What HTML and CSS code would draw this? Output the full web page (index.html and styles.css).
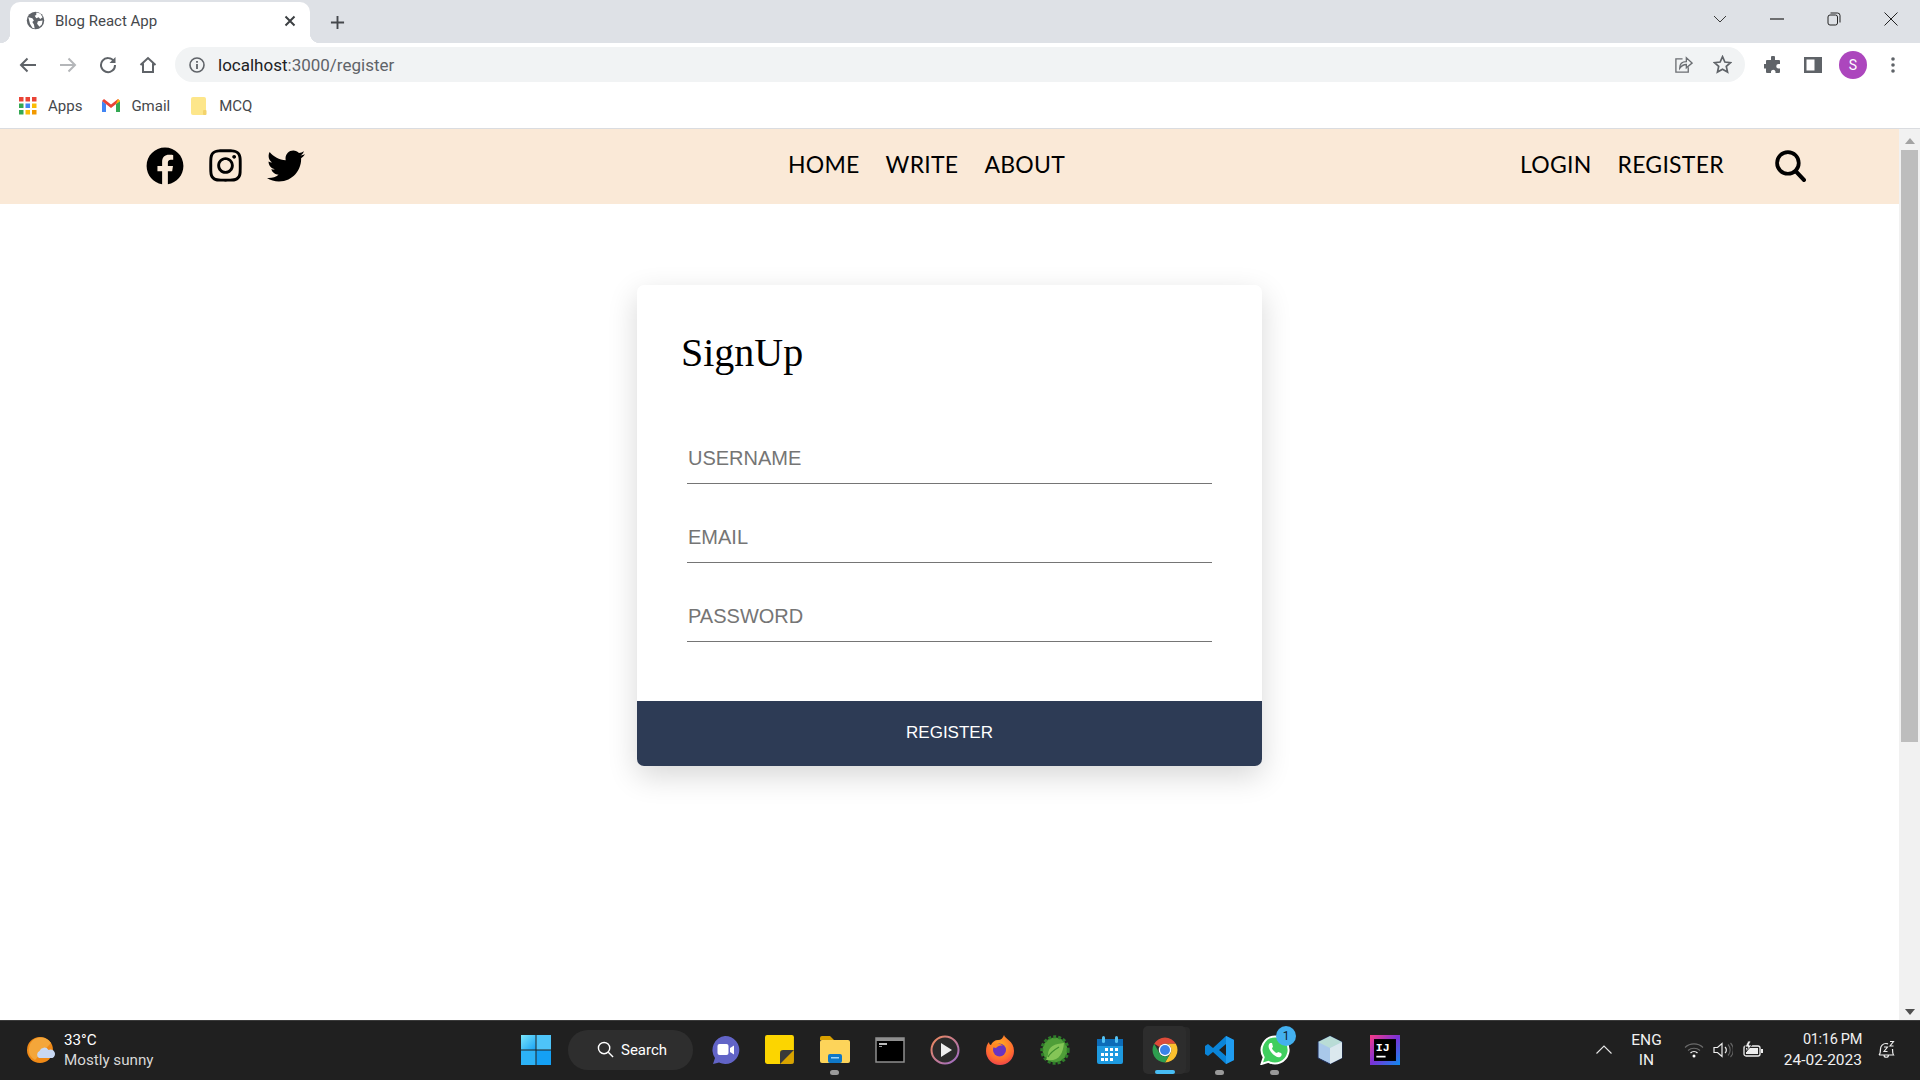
FILE: index.html
```html
<!DOCTYPE html>
<html lang="en">
<head>
<meta charset="utf-8">
<title>Blog React App</title>
<link rel="stylesheet" href="styles.css">
</head>
<body>
<div class="window">
  <div class="tabstrip">
    <div class="tab">
      <svg class="tab-favicon" viewBox="0 0 24 24"><circle cx="12" cy="12" r="11" fill="#5f6368"/><path d="M3 8l5 1 2 3-2 2 2 3 1 5-3-1-3-5zM13 2l5 1 3 5-3 2-2-2-3 1-2-3 2-1zM15 13l6-1-1 5-3 3-3-4z" fill="#fff"/></svg>
      <span class="tab-title">Blog React App</span>
      <svg class="tab-close" viewBox="0 0 12 12"><path d="M1.500 1.500l9 9M10.500 1.500l-9 9" stroke="#3c4043" stroke-width="2"/></svg>
    </div>
    <svg class="new-tab" viewBox="0 0 16 16"><path d="M8 1v14M1 8h14" stroke="#45484c" stroke-width="2"/></svg>
    <div class="win-controls">
      <span class="win-btn"><svg width="14" height="8" viewBox="0 0 14 8"><path d="M1 1l6 6 6-6" fill="none" stroke="#3a3a3a" stroke-width="1"/></svg></span>
      <span class="win-btn"><svg width="14" height="2" viewBox="0 0 14 2"><path d="M0 1h14" stroke="#222" stroke-width="1.200"/></svg></span>
      <span class="win-btn"><svg width="14" height="14" viewBox="0 0 14 14"><rect x="1" y="3" width="9.500" height="10" rx="2" fill="none" stroke="#222"/><path d="M3.500 1h7a2.500 2.500 0 0 1 2.500 2.500v7" fill="none" stroke="#222"/></svg></span>
      <span class="win-btn"><svg width="14" height="14" viewBox="0 0 14 14"><path d="M.5.5l13 13M13.500.5l-13 13" stroke="#222" stroke-width="1"/></svg></span>
    </div>
  </div>

  <div class="toolbar">
    <span class="tool"><svg width="18" height="16" viewBox="0 0 18 16"><path d="M17 8H2M8.500 1.500L2 8l6.500 6.500" fill="none" stroke="#5f6368" stroke-width="2"/></svg></span>
    <span class="tool"><svg width="18" height="16" viewBox="0 0 18 16"><path d="M1 8h15M9.500 1.500L16 8l-6.500 6.500" fill="none" stroke="#b4b6b9" stroke-width="2"/></svg></span>
    <span class="tool"><svg width="18" height="18" viewBox="0 0 18 18"><path d="M15 5.500A7 7 0 1 0 16 9" fill="none" stroke="#5f6368" stroke-width="2"/><path d="M16.500 1v6h-6z" fill="#5f6368"/></svg></span>
    <span class="tool"><svg width="18" height="18" viewBox="0 0 18 18"><path d="M1.500 9L9 2l7.500 7M4 7.500V16h10V7.500" fill="none" stroke="#5f6368" stroke-width="2"/></svg></span>
    <div class="omnibox">
      <svg class="omni-info" viewBox="0 0 16 16"><circle cx="8" cy="8" r="7" fill="none" stroke="#5f6368" stroke-width="1.600"/><path d="M8 7v5M8 4v1.800" stroke="#5f6368" stroke-width="1.800"/></svg>
      <span class="url"><span class="url-host">localhost</span>:3000/register</span>
      <svg class="omni-share" viewBox="0 0 20 20"><path d="M9 4H2v14h13v-5" fill="none" stroke="#6b6e72" stroke-width="1.400"/><path d="M6 14c0-5 3-7 7-7V3l6 5.500-6 5V10c-3 0-5 1-7 4z" fill="none" stroke="#6b6e72" stroke-width="1.400"/></svg>
      <svg class="omni-star" viewBox="0 0 20 20"><path d="M10 1.800l2.500 5.600 6 .6-4.500 4 1.300 6L10 15l-5.300 3 1.300-6-4.500-4 6-.6z" fill="none" stroke="#5f6368" stroke-width="1.800"/></svg>
    </div>
    <span class="tool"><svg width="18" height="18" viewBox="0 0 18 18"><path d="M7 1.500a2 2 0 0 1 4 0V4h4a1 1 0 0 1 1 1v3h-1.500a2.200 2.200 0 0 0 0 4.500H16V16a1 1 0 0 1-1 1h-3.500v-1.500a2.300 2.300 0 0 0-4.500 0V17H3a1 1 0 0 1-1-1v-3.500H.5a2.200 2.200 0 0 1 0-4.500H2V5a1 1 0 0 1 1-1h4z" fill="#5f6368"/></svg></span>
    <span class="tool"><svg width="18" height="18" viewBox="0 0 18 18"><path fill-rule="evenodd" d="M0 1h18v16H0zM2.500 3.500v11h8v-11z" fill="#5f6368"/></svg></span>
    <span class="tool"><span class="avatar">S</span></span>
    <span class="tool"><svg width="4" height="16" viewBox="0 0 4 16"><circle cx="2" cy="2" r="1.800" fill="#5f6368"/><circle cx="2" cy="8" r="1.800" fill="#5f6368"/><circle cx="2" cy="14" r="1.800" fill="#5f6368"/></svg></span>
  </div>

  <div class="bookmarks">
    <a class="bookmark">
      <svg class="bm-icon" viewBox="0 0 18 18">
        <rect x="0" y="0" width="4.500" height="4.500" fill="#ea4335"/><rect x="6.500" y="0" width="4.500" height="4.500" fill="#ea4335"/><rect x="13" y="0" width="4.500" height="4.500" fill="#ea4335"/>
        <rect x="0" y="6.500" width="4.500" height="4.500" fill="#34a853"/><rect x="6.500" y="6.500" width="4.500" height="4.500" fill="#4285f4"/><rect x="13" y="6.500" width="4.500" height="4.500" fill="#fbbc05"/>
        <rect x="0" y="13" width="4.500" height="4.500" fill="#34a853"/><rect x="6.500" y="13" width="4.500" height="4.500" fill="#fbbc05"/><rect x="13" y="13" width="4.500" height="4.500" fill="#f29900"/>
      </svg>
      <span>Apps</span>
    </a>
    <a class="bookmark">
      <svg class="bm-icon" viewBox="0 0 18 14"><path d="M0 2v11h4V5z" fill="#4285f4"/><path d="M14 5v8h4V2z" fill="#34a853"/><path d="M0 2l2-2 7 5.500L16 0l2 2-9 7z" fill="#ea4335"/><path d="M14 5l2-5 2 2z" fill="#fbbc05"/></svg>
      <span>Gmail</span>
    </a>
    <a class="bookmark">
      <svg class="bm-icon" viewBox="0 0 16 18"><rect x="0" y="0" width="15" height="18" rx="2" fill="#fde68a"/><rect x="12" y="13" width="3.500" height="5" rx="1" fill="#f3d36b"/></svg>
      <span>MCQ</span>
    </a>
  </div>

  <div class="viewport">
    <div class="page">
      <nav class="site-nav">
        <div class="social">
          <svg class="soc-fb" viewBox="0 0 512 512"><path d="M504 256C504 119 393 8 256 8S8 119 8 256c0 123.780 90.690 226.380 209.250 245V327.690h-63V256h63v-54.640c0-62.150 37-96.480 93.670-96.480 27.140 0 55.520 4.840 55.520 4.840v61h-31.280c-30.800 0-40.410 19.120-40.410 38.730V256h68.780l-11 71.690h-57.780V501C413.310 482.380 504 379.780 504 256z"/></svg>
          <svg class="soc-ig" viewBox="0 0 448 512"><path d="M224.100 141c-63.600 0-114.900 51.300-114.900 114.900s51.300 114.900 114.900 114.900S339 319.500 339 255.900 287.700 141 224.100 141zm0 189.600c-41.100 0-74.700-33.500-74.700-74.700s33.500-74.700 74.700-74.700 74.700 33.500 74.700 74.700-33.600 74.700-74.700 74.700zm146.400-194.300c0 14.900-12 26.800-26.800 26.800-14.900 0-26.800-12-26.800-26.800s12-26.800 26.800-26.800 26.800 12 26.800 26.800zm76.100 27.200c-1.700-35.900-9.900-67.700-36.200-93.900-26.200-26.200-58-34.400-93.900-36.200-37-2.100-147.900-2.100-184.900 0-35.800 1.700-67.600 9.900-93.900 36.100s-34.400 58-36.200 93.900c-2.100 37-2.100 147.900 0 184.900 1.700 35.900 9.900 67.700 36.200 93.900s58 34.400 93.900 36.200c37 2.100 147.900 2.100 184.900 0 35.900-1.700 67.700-9.900 93.900-36.200 26.200-26.200 34.400-58 36.200-93.900 2.100-37 2.100-147.800 0-184.800zM398.800 388c-7.800 19.600-22.900 34.700-42.600 42.600-29.500 11.700-99.500 9-132.100 9s-102.700 2.600-132.100-9c-19.600-7.800-34.700-22.900-42.600-42.600-11.700-29.500-9-99.500-9-132.100s-2.600-102.700 9-132.100c7.800-19.600 22.900-34.700 42.600-42.600 29.500-11.700 99.500-9 132.100-9s102.700-2.600 132.100 9c19.600 7.800 34.700 22.900 42.600 42.600 11.700 29.500 9 99.500 9 132.100s2.700 102.700-9 132.100z"/></svg>
          <svg class="soc-tw" viewBox="0 0 512 512"><path d="M459.370 151.716c.325 4.548.325 9.097.325 13.645 0 138.720-105.583 298.558-298.558 298.558-59.452 0-114.680-17.219-161.137-47.106 8.447.974 16.568 1.299 25.340 1.299 49.055 0 94.213-16.568 130.274-44.832-46.132-.975-84.792-31.188-98.112-72.772 6.498.974 12.995 1.624 19.818 1.624 9.421 0 18.843-1.300 27.614-3.573-48.081-9.747-84.143-51.980-84.143-102.985v-1.299c13.969 7.797 30.214 12.670 47.431 13.319-28.264-18.843-46.781-51.005-46.781-87.391 0-19.492 5.197-37.360 14.294-52.954 51.655 63.675 129.300 105.258 216.365 109.807-1.624-7.797-2.599-15.918-2.599-24.040 0-57.828 46.782-104.934 104.934-104.934 30.213 0 57.502 12.670 76.670 33.137 23.715-4.548 46.456-13.320 66.599-25.340-7.798 24.366-24.366 44.833-46.132 57.827 21.117-2.273 41.584-8.122 60.426-16.243-14.292 20.791-32.161 39.308-52.628 54.253z"/></svg>
        </div>
        <ul class="nav-list nav-center">
          <li>HOME</li><li>WRITE</li><li>ABOUT</li>
        </ul>
        <ul class="nav-list nav-right">
          <li>LOGIN</li><li>REGISTER</li>
        </ul>
        <svg class="nav-search" viewBox="0 0 30 31"><circle cx="12.500" cy="12.500" r="10.500" fill="none" stroke="#000" stroke-width="3.600"/><path d="M20 20.500l8 8.500" stroke="#000" stroke-width="4" stroke-linecap="round"/></svg>
      </nav>
      <main class="page-main">
        <form class="card">
          <div class="card-body">
            <h1 class="card-title">SignUp</h1>
            <div class="fields">
              <input class="field" type="text" placeholder="USERNAME">
              <input class="field" type="text" placeholder="EMAIL">
              <input class="field" type="password" placeholder="PASSWORD">
            </div>
          </div>
          <button class="submit" type="button">REGISTER</button>
        </form>
      </main>
    </div>
    <div class="scrollbar">
      <span class="arrow-up"></span>
      <div class="thumb"></div>
      <span class="arrow-down"></span>
    </div>
  </div>

  <footer class="taskbar">
    <div class="weather">
      <svg class="weather-icon" viewBox="0 0 28 28"><circle cx="13" cy="14" r="13" fill="#f08a17"/><path d="M2 12a12 12 0 0 1 22-5L8 24A12 12 0 0 1 2 12z" fill="#f4a63a"/><path d="M12 22a4 4 0 0 1 .5-7 5 5 0 0 1 9-1 4 4 0 0 1 4 8z" fill="#c8d8f2"/></svg>
      <div class="weather-text"><div class="temp">33°C</div><div class="sky">Mostly sunny</div></div>
    </div>
    <svg class="start" viewBox="0 0 30 30">
      <defs><linearGradient id="winA" x1="0" y1="0" x2="1" y2="1"><stop offset="0" stop-color="#7be6fb"/><stop offset="1" stop-color="#1aa4f5"/></linearGradient></defs>
      <rect x="0" y="0" width="14.500" height="14.500" fill="url(#winA)"/><rect x="15.500" y="0" width="14.500" height="14.500" fill="#4ec4f8"/><rect x="0" y="15.500" width="14.500" height="14.500" fill="#2cb2f6"/><rect x="15.500" y="15.500" width="14.500" height="14.500" fill="#14a0f4"/>
    </svg>
    <div class="search-pill">
      <svg class="pill-icon" viewBox="0 0 18 18"><circle cx="7.500" cy="7.500" r="6" fill="none" stroke="#fff" stroke-width="1.500"/><path d="M12 12l5 5" stroke="#fff" stroke-width="1.500"/></svg>
      <span>Search</span>
    </div>
    <div class="apps">
      <span class="app"><svg viewBox="0 0 30 30"><path d="M15 1a14 14 0 1 1-6 26.500L3 29l2-6A14 14 0 0 1 15 1z" fill="#6264c7"/><rect x="7.500" y="9" width="11" height="11" rx="2" fill="#fff"/><path d="M20 13l4-2.500v9L20 17z" fill="#fff"/></svg></span>
      <span class="app"><svg viewBox="0 0 28 28"><rect x="0" y="0" width="27" height="27" rx="2" fill="#fcd500"/><path d="M14 27V17a3 3 0 0 1 3-3h10v10a3 3 0 0 1-3 3z" fill="#3a3a3a"/><path d="M14 27l13-13v10a3 3 0 0 1-3 3z" fill="#d9a400"/></svg></span>
      <span class="app has-dot"><svg viewBox="0 0 30 30"><path d="M0 3a2 2 0 0 1 2-2h8l4 4H0z" fill="#d9a000"/><rect x="0" y="5" width="30" height="23" rx="2" fill="#fdd45a"/><rect x="8" y="19" width="14" height="9" rx="2" fill="#0f78c8"/><rect x="11" y="22" width="8" height="1.500" fill="#9ed4f8"/></svg></span>
      <span class="app"><svg viewBox="0 0 30 30"><rect x="1" y="3" width="28" height="24" fill="#000" stroke="#8f8f8f" stroke-width="1.500"/><rect x="1" y="3" width="28" height="3" fill="#8f8f8f"/><rect x="4" y="8" width="8" height="2" fill="#bbb"/><rect x="4" y="11" width="3" height="1" fill="#999"/></svg></span>
      <span class="app"><svg viewBox="0 0 30 30"><defs><linearGradient id="plA" x1="0" y1="0" x2="1" y2="1"><stop offset="0" stop-color="#f08a5a"/><stop offset="1" stop-color="#9a6bc8"/></linearGradient></defs><circle cx="15" cy="15" r="13.500" fill="#2b2b2b" stroke="url(#plA)" stroke-width="2"/><path d="M11 8l11 7-11 7z" fill="#eee"/></svg></span>
      <span class="app"><svg viewBox="0 0 30 30"><defs><radialGradient id="ffA" cx=".5" cy=".35" r=".8"><stop offset="0" stop-color="#ffb020"/><stop offset=".6" stop-color="#ff6a30"/><stop offset="1" stop-color="#e0255f"/></radialGradient></defs><path d="M19 0c1 4 10 6 10 16a14 14 0 0 1-28 0c0-4 1-7 3-9 0 2 1 3 2 3 1-3 4-5 7-5 3 0 5-2 6-5z" fill="url(#ffA)"/><circle cx="14.500" cy="15" r="6.500" fill="#6a34c0"/><path d="M7 10c3-2 8-2 11 1-3-1-5 0-7 2-2 0-3-1-4-3z" fill="#ff8a20"/></svg></span>
      <span class="app"><svg viewBox="0 0 30 30"><circle cx="15" cy="15" r="12.500" fill="#4f9e38"/><circle cx="15" cy="15" r="13.200" fill="none" stroke="#2f7d2a" stroke-width="3" stroke-dasharray="3 2"/><path d="M6 25c13 2 17-6 18-17-9 1-16 3-16 12" fill="#84c557"/><path d="M8 22c2-4 6-7 11-10" stroke="#3f8f2f" stroke-width="1.200" fill="none"/></svg></span>
      <span class="app"><svg viewBox="0 0 28 30"><rect x="1" y="4" width="26" height="25" rx="2" fill="#1e9ae0"/><rect x="1" y="4" width="26" height="7" fill="#0c6cb8"/><rect x="6" y="1" width="3" height="7" rx="1.500" fill="#54c3f4"/><rect x="19" y="1" width="3" height="7" rx="1.500" fill="#54c3f4"/><path d="M9 13h3v3H9zM14 13h3v3h-3zM19 13h3v3h-3zM5 18h3v3H5zM9 18h3v3H9zM14 18h3v3h-3zM19 18h3v3h-3zM5 23h3v3H5zM9 23h3v3H9zM14 23h3v3h-3z" fill="#fff"/></svg></span>
      <span class="app app-active"><svg viewBox="0 0 48 48"><path d="M6.680 14A20 20 0 0 1 41.320 14H24A10 10 0 0 0 15.300 19z" fill="#dd4b39"/><path d="M41.320 14A20 20 0 0 1 24 44L32.700 29A10 10 0 0 0 24 14z" fill="#fbc02d"/><path d="M24 44A20 20 0 0 1 6.680 14L15.300 29A10 10 0 0 0 32.700 29z" fill="#2e9e4f"/><circle cx="24" cy="24" r="10" fill="#fff"/><circle cx="24" cy="24" r="8" fill="#3b82e8"/></svg></span>
      <span class="app has-dot"><svg viewBox="0 0 30 30"><path d="M21 1l8 4v20l-8 4L8 17l-5 4-3-2v-8l3-2 5 4zM21 9l-7 6 7 6z" fill="#0a84d8"/><path d="M21 1l8 4v20l-8 4z" fill="#1f9cf0"/></svg></span>
      <span class="app has-dot app-wa">
        <svg viewBox="0 0 30 30"><path d="M15 1.500a13.500 13.500 0 1 1-6.500 25.300L1.500 29l2.200-6.800A13.500 13.500 0 0 1 15 1.500z" fill="#3fce5e" stroke="#fff" stroke-width="2"/><path d="M10 8c-2 2-2 5 1 9s7 6 9 5 2-3 1-4l-3-1-1 1c-1.500 0-5-3.500-5-5l1-1-1-4z" fill="#fff"/></svg>
        <span class="badge">1</span>
      </span>
      <span class="app"><svg viewBox="0 0 30 30"><path d="M15 1l12 6v16l-12 6-12-6V7z" fill="#a9c8ea" stroke="#1b2a55" stroke-width="1"/><path d="M15 1l12 6-12 6L3 7z" fill="#b9dcd6"/><path d="M15 13l12-6v16l-12 6z" fill="#dbe8ee"/></svg></span>
      <span class="app"><svg viewBox="0 0 26 26"><defs><linearGradient id="ijA" x1="0" y1="0" x2="1" y2="1"><stop offset="0" stop-color="#fb3a84"/><stop offset=".5" stop-color="#7a32d8"/><stop offset="1" stop-color="#0b8ef0"/></linearGradient></defs><rect width="26" height="26" fill="url(#ijA)"/><rect x="3.500" y="3.500" width="19" height="19" fill="#000"/><text x="5" y="14" font-size="10" font-weight="700" fill="#fff" font-family="Liberation Mono, monospace">IJ</text><rect x="5.500" y="18" width="8" height="1.500" fill="#fff"/></svg></span>
    </div>
    <div class="tray">
      <svg class="tray-caret" viewBox="0 0 16 9"><path d="M.5 8.500L8 1l7.500 7.500" fill="none" stroke="#e8e8e8" stroke-width="1.100"/></svg>
      <div class="lang"><div>ENG</div><div>IN</div></div>
      <svg class="tray-wifi" viewBox="0 0 20 16"><path d="M1 5.500a13 13 0 0 1 18 0M4 8.500a9 9 0 0 1 12 0" fill="none" stroke="#6a6a6a" stroke-width="1.100"/><path d="M6.500 11a5 5 0 0 1 7 0" fill="none" stroke="#eee" stroke-width="1.300"/><circle cx="10" cy="14" r="1.500" fill="#fff"/></svg>
      <svg class="tray-vol" viewBox="0 0 20 18"><path d="M1 6.500h3.500L9 2.500v13l-4.500-4H1z" fill="none" stroke="#eee" stroke-width="1.200"/><path d="M12 6a4 4 0 0 1 0 6" fill="none" stroke="#eee" stroke-width="1.200"/><path d="M15 3.500a8 8 0 0 1 0 11M17.500 2a10 10 0 0 1 0 14" fill="none" stroke="#666" stroke-width="1.100"/></svg>
      <svg class="tray-bat" viewBox="0 0 21 18"><rect x="1" y="5" width="16" height="10" rx="2" fill="none" stroke="#eee" stroke-width="1.300"/><rect x="3" y="7" width="12" height="6" fill="#eee"/><rect x="18" y="8" width="2" height="4" fill="#eee"/><path d="M5 0L2 6h3l-2 5 6-7H6l2-4z" fill="#eee" stroke="#202020" stroke-width=".8"/></svg>
      <div class="clock"><div class="clock-time">01:16 PM</div><div>24-02-2023</div></div>
      <svg class="tray-bell" viewBox="0 0 18 20"><path d="M2 15c1.500-1.500 1.500-3 1.500-6A5.500 5.500 0 0 1 9 3.500c1 0 1.500.2 2 .4M15.500 9c0 3 0 4.500 1 6H2M7 15a2.200 2.200 0 0 0 4.500 0" fill="none" stroke="#eee" stroke-width="1.200"/><path d="M7 7h3.500L7 11.500h3.500M13 1.500h3.500L13 6h3.500" fill="none" stroke="#eee" stroke-width="1.100"/></svg>
    </div>
  </footer>
</div>
</body>
</html>
```
FILE: styles.css
```css
* { box-sizing: border-box; }
html, body { margin: 0; height: 100%; overflow: hidden; }
body { font-family: Roboto, "Open Sans", sans-serif; background: #fff; color: #000; }
.window { width: 1920px; height: 1080px; display: flex; flex-direction: column; }

/* tab strip */
.tabstrip { height: 43px; flex: none; background: #dee1e6; display: flex; align-items: flex-end; padding-left: 10px; }
.tab { position: relative; width: 300px; height: 41px; background: #fff; border-radius: 10px 10px 0 0; display: flex; align-items: center; padding: 0 14px 4px 16px; }
.tab::before, .tab::after { content: ""; position: absolute; bottom: 0; width: 10px; height: 10px; }
.tab::before { left: -10px; background: radial-gradient(circle at 0 0, #dee1e6 10px, #fff 10.5px); }
.tab::after { right: -10px; background: radial-gradient(circle at 100% 0, #dee1e6 10px, #fff 10.5px); }
.tab-favicon { width: 19px; height: 19px; flex: none; }
.tab-title { font-size: 15px; color: #45484c; margin-left: 10px; flex: 1; white-space: nowrap; }
.tab-close { width: 12px; height: 12px; flex: none; }
.new-tab { width: 15px; height: 15px; margin: 0 0 13px 20px; flex: none; }
.win-controls { margin-left: auto; height: 43px; display: flex; align-items: flex-start; padding-right: 1px; }
.win-btn { width: 57px; height: 37px; display: flex; align-items: center; justify-content: center; }
.win-btn:first-child { width: 56px; }

/* toolbar */
.toolbar { height: 42px; flex: none; background: #fff; display: flex; align-items: center; padding-left: 8px; padding-top: 1px; }
.tool { width: 40px; height: 36px; flex: none; display: flex; align-items: center; justify-content: center; }
.omnibox { width: 1570px; height: 35px; margin: 0 8px 0 7px; flex: none; border-radius: 18px; background: #f1f3f4; display: flex; align-items: center; padding: 0 13px 0 14px; }
.omni-info { width: 16px; height: 16px; flex: none; }
.url { font-size: 17px; color: #5f6368; margin-left: 13px; flex: 1; padding-top: 1px; }
.url-host { color: #202124; }
.omni-share { width: 19px; height: 19px; flex: none; margin-right: 20px; }
.omni-star { width: 19px; height: 19px; flex: none; }
.avatar { width: 28px; height: 28px; border-radius: 50%; background: #ac46bd; color: #fff; font-size: 14px; display: flex; align-items: center; justify-content: center; }

/* bookmarks */
.bookmarks { height: 44px; flex: none; background: #fff; border-bottom: 1px solid #dadce0; display: flex; align-items: center; padding-left: 19px; padding-bottom: 1px; }
.bookmark { display: flex; align-items: center; font-size: 15px; color: #45484c; margin-right: 20px; }
.bm-icon { width: 18px; height: 18px; flex: none; margin-right: 11px; }

/* page */
.viewport { flex: 1; display: flex; min-height: 0; }
.page { flex: 1; display: flex; flex-direction: column; min-width: 0; background: #fff; }
.site-nav { height: 75px; flex: none; background: #fae9d7; display: flex; align-items: center; font-family: Lato, "Liberation Sans", sans-serif; }
.social { display: flex; align-items: center; gap: 25px; padding: 0 0 2px 146px; width: 788px; flex: none; }
.social svg { height: 38px; flex: none; }
.soc-fb { width: 38px; }
.soc-ig { width: 33px; height: 37px !important; }
.soc-tw { width: 38px; }
.nav-list { list-style: none; margin: 0; padding: 0 0 5px; display: flex; gap: 26px; font-size: 23px; letter-spacing: .25px; color: #000; }
.nav-right { margin-left: 455px; }
.nav-search { width: 31px; height: 32px; margin: 0 0 2px 51px; flex: none; }
.page-main { flex: 1; display: flex; justify-content: center; padding-top: 81px; }
.card { width: 625px; height: 481px; border-radius: 7px; background: #fff; box-shadow: 0 10px 30px rgba(0, 0, 0, .16); display: flex; flex-direction: column; overflow: hidden; }
.card-body { flex: 1; padding: 45px 50px 0 44px; }
.card-title { margin: 0 0 70px; font: 400 40px/46px "Liberation Serif", serif; color: #000; }
.fields { display: flex; flex-direction: column; gap: 41px; margin-left: 6px; }
.field { width: 525px; height: 38px; padding: 1px 1px 13px; border: 0; border-bottom: 1px solid #757575; border-radius: 0; outline: 0; background: transparent; font: 400 20px/23px "Liberation Sans", Arial, sans-serif; }
.field::placeholder { color: #757575; opacity: 1; }
.submit { height: 65px; flex: none; border: 0; background: #2d3b55; color: #fff; font: 400 17px "Liberation Sans", Arial, sans-serif; padding: 0 0 2px; }

.scrollbar { width: 21px; flex: none; background: #f1f1f1; display: flex; flex-direction: column; align-items: center; padding: 0 0 5px 0; }
.arrow-up { width: 0; height: 0; border: 5px solid transparent; border-top: 0; border-bottom: 6px solid #a3a3a3; margin-top: 9px; }
.thumb { width: 17px; height: 592px; background: #bdbdbd; margin-top: 6px; }
.arrow-down { width: 0; height: 0; border: 5px solid transparent; border-bottom: 0; border-top: 6px solid #505050; margin-top: auto; }

/* taskbar */
.taskbar { height: 60px; flex: none; background: #202020; border-top: 1px solid #3a3a3a; display: flex; align-items: center; padding-bottom: 2px; color: #fff; position: relative; }
.weather { width: 521px; flex: none; display: flex; align-items: center; padding-left: 27px; }
.weather-icon { width: 28px; height: 28px; flex: none; }
.weather-text { margin-left: 9px; font-size: 15.200px; line-height: 20px; white-space: nowrap; }
.sky { color: #d8d8d8; }
.start { width: 30px; height: 30px; flex: none; }
.search-pill { width: 125px; height: 40px; margin-left: 17px; flex: none; border-radius: 20px; background: #2e2e2e; display: flex; align-items: center; padding-left: 29px; font-size: 15px; }
.pill-icon { width: 17px; height: 17px; margin-right: 7px; flex: none; }
.apps { display: flex; margin-left: 4px; flex: none; }
.app { position: relative; width: 55px; height: 48px; display: flex; align-items: center; justify-content: center; }
.app > svg { width: 30px; height: 30px; }
.has-dot::after { content: ""; position: absolute; left: 23px; bottom: -1px; width: 9px; height: 5px; border-radius: 3px; background: #9a9a9a; }
.app-active { background: #2d2d2d; border-radius: 5px; box-shadow: 5px 0 0 -1px #292929; width: 43px; margin: 0 6px; }
.app-active::after { content: ""; position: absolute; left: 12px; bottom: 0; width: 20px; height: 4px; border-radius: 2px; background: #47bdf5; }
.badge { position: absolute; left: 29px; top: 0; width: 20px; height: 20px; border-radius: 50%; background: #43b0ef; color: #10202a; font-size: 12px; display: flex; align-items: center; justify-content: center; }
.tray { margin-left: auto; display: flex; align-items: center; padding-right: 25px; font-size: 15.500px; color: #f0f0f0; }
.tray-caret { width: 16px; height: 9px; flex: none; }
.lang { width: 29px; margin-left: 20px; text-align: center; line-height: 20px; white-space: nowrap; display: flex; flex-direction: column; align-items: center; }
.tray-wifi { width: 20px; height: 16px; margin-left: 23px; flex: none; }
.tray-vol { width: 20px; height: 18px; margin-left: 9px; flex: none; }
.tray-bat { width: 21px; height: 18px; margin-left: 10px; flex: none; }
.clock { width: 98px; text-align: right; line-height: 20px; white-space: nowrap; }
.clock-time { font-size: 14.500px; letter-spacing: -.3px; }
.tray-bell { width: 18px; height: 20px; margin-left: 15px; flex: none; }
```
